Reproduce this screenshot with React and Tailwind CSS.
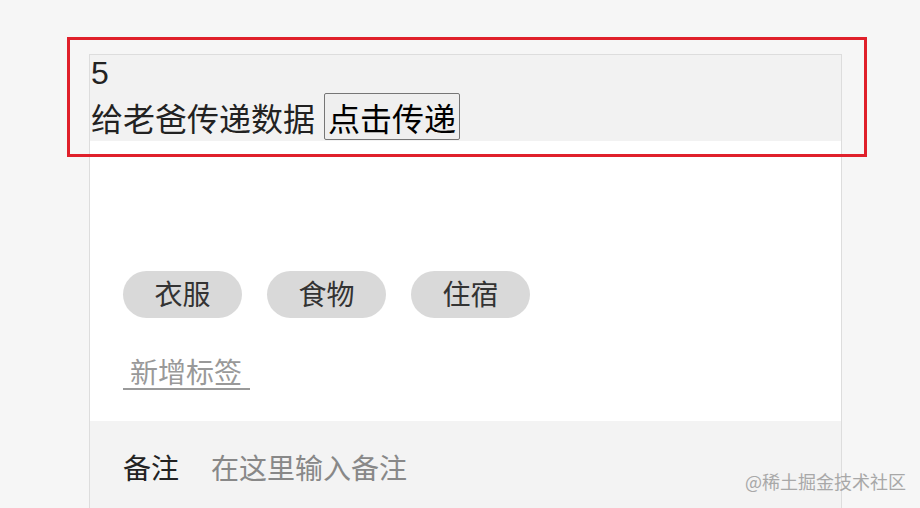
import React from 'react'

const font = { fontFamily: '"Noto Sans CJK SC", "Noto Sans", sans-serif' }

const tags = ['衣服', '食物', '住宿']

export default function App() {
  return (
    <div
      className="relative h-[508px] w-[920px] overflow-hidden bg-[#f6f6f6] font-['Noto_Sans_CJK_SC',sans-serif]"
      style={font}
    >
      <div className="ml-[89px] mt-[54px] w-[753px] border border-[#dddddd] bg-white">
        {/* child component area */}
        <div className="bg-[#f2f2f2] pl-[1px] text-[32px] text-[#222]">
          <div className="h-[37px] leading-[37px] font-['Liberation_Sans','Noto_Sans_CJK_SC',sans-serif]">5</div>
          <div className="flex h-[49px] items-center">
            <span className="leading-[40px]">给老爸传递数据</span>
            <button className="ml-[9px] h-[47px] rounded-[2px] border border-[#767676] bg-[#efefef] px-[3px] text-[32px] leading-[44px] text-black">
              点击传递
            </button>
          </div>
        </div>

        <div className="px-[33px] pb-[31px] pt-[130px]">
          <div className="flex gap-[25px]">
            {tags.map((t) => (
              <div
                key={t}
                className="flex h-[47px] w-[119px] items-center justify-center rounded-full bg-[#d9d9d9] pb-[3px] text-[28px] text-[#333]"
              >
                {t}
              </div>
            ))}
          </div>
          <input
            className="mt-[32px] h-[40px] w-[127px] border-b-2 border-[#9a9a9a] bg-transparent pl-[7px] pt-[3px] text-[28px] leading-[36px] text-[#333] outline-none placeholder:text-[#999]"
            placeholder="新增标签"
          />
        </div>

        <div className="flex h-[100px] items-start gap-[32px] bg-[#f3f3f3] px-[33px] pt-[26px] text-[28px]">
          <span className="leading-[40px] text-[#222]">备注</span>
          <input
            className="h-[40px] flex-1 bg-transparent leading-[40px] text-[#333] outline-none placeholder:text-[#888]"
            placeholder="在这里输入备注"
          />
        </div>
      </div>

      {/* highlight frame */}
      <div className="pointer-events-none absolute left-[67px] top-[37px] h-[120px] w-[800px] border-[3px] border-[#e0202b]" />

      {/* watermark */}
      <div className="absolute right-[14px] top-[469px] text-[18px] leading-[24px] text-[#a8a8a8]">@稀土掘金技术社区</div>
    </div>
  )
}
